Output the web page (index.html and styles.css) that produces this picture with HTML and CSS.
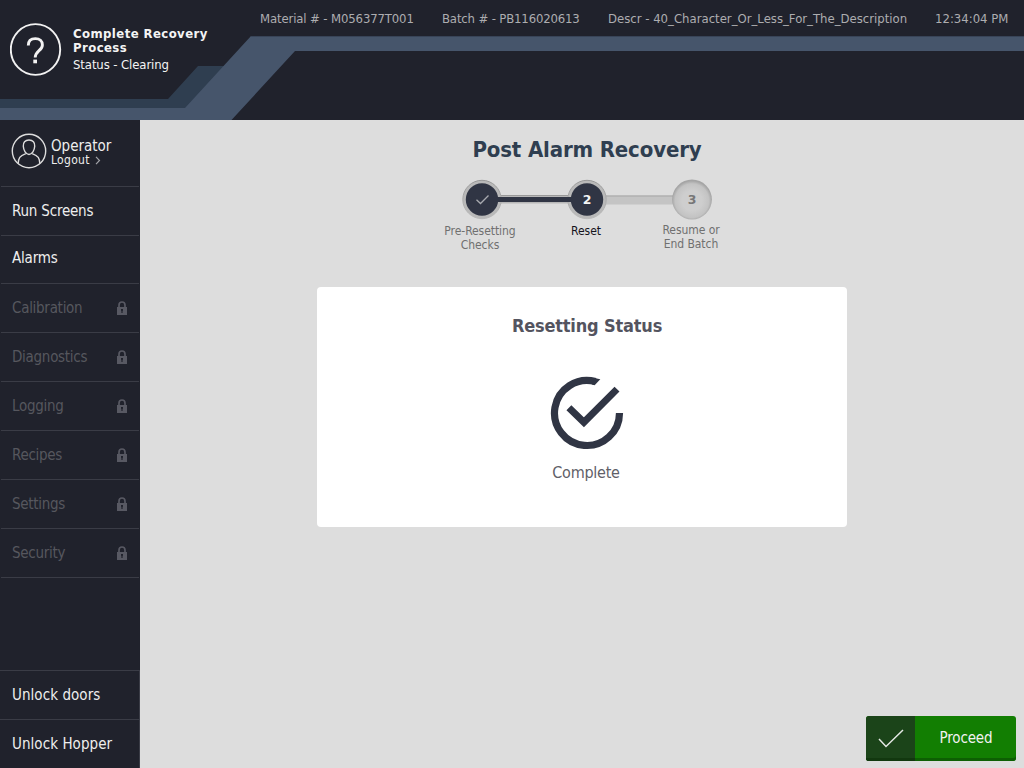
FILE: index.html
```html
<!DOCTYPE html>
<html lang="en">
<head>
<meta charset="utf-8">
<title>Post Alarm Recovery</title>
<link rel="stylesheet" href="styles.css">
</head>
<body>
<svg class="defs" width="0" height="0" aria-hidden="true">
  <symbol id="lock" viewBox="0 0 10 14">
    <path d="M2 7V4.200a3 3.200 0 0 1 6 0V7" fill="none" stroke="currentColor" stroke-width="1.700"/>
    <path fill="currentColor" fill-rule="evenodd" d="M0 6h10v8H0zM4 8v1.800h.4V12h1.200V9.800H6V8z"/>
  </symbol>
</svg>
<div class="app">
  <header class="header">
    <svg class="ribbon" viewBox="0 0 1024 120" aria-hidden="true">
      <path d="M0 99H168L198 66H225L188 110H0Z" fill="#2f3e50"/>
      <path d="M0 108H185L251 36H1024V51H295L231.500 120H0Z" fill="#46556b"/>
      <path d="M251 36.500H1024" stroke="#384458"/>
    </svg>
    <div class="process">
      <svg class="help" width="52" height="54" viewBox="0 0 52 54" aria-hidden="true">
        <ellipse cx="25.500" cy="26.500" rx="24.700" ry="25.400" fill="none" stroke="#f2f2f2" stroke-width="1.900"/>
        <path d="M18.300 22.500C18.300 17.500 21 15.600 25.400 15.600c4.300 0 7 2.400 7 6.300 0 5.700-7.200 6-7.200 12.600" fill="none" stroke="#f2f2f2" stroke-width="2.900"/>
        <rect x="23.300" y="36.600" width="3.700" height="3.700" fill="#f2f2f2"/>
      </svg>
      <div class="process-text">
        <div class="process-name">Complete Recovery<br>Process</div>
        <div class="process-status">Status - Clearing</div>
      </div>
    </div>
    <div class="info">
      <span class="material">Material # - M056377T001</span>
      <span class="batch">Batch # - PB116020613</span>
      <span class="descr">Descr - 40_Character_Or_Less_For_The_Description</span>
      <span class="clock">12:34:04 PM</span>
    </div>
  </header>
  <div class="body">
    <nav class="sidebar">
      <div class="user">
        <svg class="avatar" width="36" height="36" viewBox="0 0 36 36" fill="none" stroke="#dcdcdc" stroke-width="1.400" aria-hidden="true">
          <circle cx="18" cy="18" r="16.700"/>
          <path d="M18 7c-4 0-6 2.600-5.700 6.200.2 4 2.600 8.300 5.700 8.300s5.500-4.300 5.700-8.300c.3-3.600-1.700-6.200-5.700-6.200Z"/>
          <path d="M7.200 30.500c.3-5.500 1.300-7.500 7.600-9.900M28.800 30.500c-.3-5.500-1.300-7.500-7.600-9.900"/>
        </svg>
        <div class="user-text">
          <div class="user-name">Operator</div>
          <div class="logout">Logout <svg class="chevron" width="6" height="9" viewBox="0 0 6 9"><path d="M1 .8 4.500 4.500 1 8.200" fill="none" stroke="#a2a3a8" stroke-width="1.200"/></svg></div>
        </div>
      </div>
      <div class="item run"><span>Run Screens</span></div>
      <div class="item alarms"><span>Alarms</span></div>
      <div class="item locked"><span>Calibration</span><svg class="lock"><use href="#lock"/></svg></div>
      <div class="item locked"><span>Diagnostics</span><svg class="lock"><use href="#lock"/></svg></div>
      <div class="item locked"><span>Logging</span><svg class="lock"><use href="#lock"/></svg></div>
      <div class="item locked"><span>Recipes</span><svg class="lock"><use href="#lock"/></svg></div>
      <div class="item locked"><span>Settings</span><svg class="lock"><use href="#lock"/></svg></div>
      <div class="item locked"><span>Security</span><svg class="lock"><use href="#lock"/></svg></div>
      <div class="bottom">
        <div class="action doors"><span>Unlock doors</span></div>
        <div class="action hopper"><span>Unlock Hopper</span></div>
      </div>
    </nav>
    <main class="main">
      <h1 class="title">Post Alarm Recovery</h1>
      <div class="stepper">
        <svg class="track" width="254" height="42" viewBox="0 0 254 42" aria-hidden="true">
          <defs>
            <linearGradient id="rim" x1="0" y1="0" x2="0" y2="1"><stop offset="0" stop-color="#989898"/><stop offset="1" stop-color="#bababa"/></linearGradient>
            <linearGradient id="bar" x1="0" y1="0" x2="0" y2="1"><stop offset="0" stop-color="#a8a8a8"/><stop offset=".35" stop-color="#c4c4c4"/><stop offset="1" stop-color="#c6c6c6"/></linearGradient>
            <radialGradient id="well" cy=".53"><stop offset=".5" stop-color="#cecece"/><stop offset=".85" stop-color="#c3c3c3"/><stop offset="1" stop-color="#a5a5a5"/></radialGradient>
          </defs>
          <path d="M36 12Q38 16 42 16H110Q114 16 116 12V30Q114 24.500 110 24.500H42Q38 24.500 36 29Z" fill="#b7b7b7"/>
          <path d="M40 16.500H112" stroke="#999"/>
          <path d="M142 11Q143.500 16.500 148 16.500H213Q217.500 16.500 219 11V30Q217.500 25.500 213 25.500H148Q143.500 25.500 142 30Z" fill="#c4c4c4"/>
          <path d="M146 17H215" stroke="#a6a6a6"/>
          <circle cx="22" cy="20.500" r="19.200" fill="#b9b9b9" stroke="url(#rim)"/>
          <circle cx="127" cy="20.500" r="19.200" fill="#b9b9b9" stroke="url(#rim)"/>
          <circle cx="232" cy="20.500" r="19.900" fill="url(#well)"/>
          <path d="M36 20.500H115" stroke="#303544" stroke-width="5"/>
          <circle cx="22" cy="20.500" r="16.200" fill="#303544"/>
          <circle cx="127" cy="20.500" r="16.200" fill="#303544"/>
          <path d="M16.500 20.800 20.500 24.500 28.500 16.500" fill="none" stroke="#a9abb0" stroke-width="1.300"/>
        </svg>
        <div class="numbers"><span class="num two">2</span><span class="num three">3</span></div>
        <div class="labels">
          <div class="label">Pre-Resetting<br>Checks</div>
          <div class="label current">Reset</div>
          <div class="label last">Resume or<br>End Batch</div>
        </div>
      </div>
      <section class="card">
        <h2 class="card-title">Resetting Status</h2>
        <svg class="done" width="74" height="74" viewBox="0 0 74 74" fill="none" stroke="#303544" aria-hidden="true">
          <path d="M45.400 5.600A32.500 32.500 0 1 0 69.500 37" stroke-width="7.200"/>
          <path d="M42 11 50.500 2.600 56 8 48 15Z" fill="#fff" stroke="none"/>
          <path d="M44.300 2.100 50.300 3.300 44.600 9.200 42 8.400Z" fill="#303544" stroke="none"/>
          <path d="M18.900 32.700 33.900 47.300 67 14.100" stroke-width="7" transform="translate(0 -1)"/>
        </svg>
        <div class="complete">Complete</div>
      </section>
      <button class="proceed"><span class="tick"><svg width="26" height="20" viewBox="0 0 26 20"><path d="M1 10 8 17.500 25 1" fill="none" stroke="#e4e8e4" stroke-width="1.500"/></svg></span><span class="proceed-label">Proceed</span></button>
    </main>
  </div>
</div>
</body>
</html>
```
FILE: styles.css
```css
* { box-sizing: border-box; }
body { margin: 0; font-family: "DejaVu Sans Condensed", "DejaVu Sans", sans-serif; font-stretch: condensed; color: #eee; }
.defs { position: absolute; }
.app { width: 1024px; height: 768px; overflow: hidden; display: flex; flex-direction: column; background: #ddd; }
span, .title, .card-title, .label, .complete { white-space: nowrap; }

.header { position: relative; height: 120px; flex: none; background: #20222c; display: flex; justify-content: space-between; }
.ribbon { position: absolute; inset: 0; width: 1024px; height: 120px; }
.process { position: relative; display: flex; width: 250px; padding: 23px 0 0 10px; }
.help { flex: none; }
.process-text { margin: 4px 0 0 11px; color: #f4f4f4; font-size: 13px; }
.process-name { font-weight: 700; line-height: 14px; white-space: nowrap; letter-spacing: .42px; }
.process-status { line-height: 20px; letter-spacing: -.1px; }
.info { position: relative; display: flex; height: 36px; width: 764px; align-items: center; color: #adadb0; font-size: 13px; }
.material { width: 182px; letter-spacing: -.13px; }
.batch { width: 166px; letter-spacing: -.15px; }
.descr { width: 327px; }

.body { flex: 1; display: flex; min-height: 0; }
.sidebar { width: 140px; background: #20222c; display: flex; flex-direction: column; }
.user { height: 67px; margin: 0 1px; padding: 13px 0 0 10px; display: flex; border-bottom: 1px solid #3a3c46; }
.user-text { margin: 5px 0 0 4px; }
.user-name { font-size: 15px; line-height: 16px; }
.logout { font-size: 12px; line-height: 12px; white-space: nowrap; letter-spacing: .3px; }
.chevron { margin-left: 2px; vertical-align: -1px; }
.item { height: 49px; margin: 0 1px; padding: 0 12px 0 11px; display: flex; align-items: center; justify-content: space-between; border-bottom: 1px solid #3a3c46; font-size: 15px; letter-spacing: -.2px; }
.alarms { height: 48px; padding-bottom: 4px; }
.locked { color: #56575e; letter-spacing: -.28px; }
.lock { width: 10px; height: 14px; color: #585963; }
.bottom { margin-top: auto; border-right: 1px solid #3a3c46; }
.action { height: 49px; padding-left: 12px; display: flex; align-items: center; border-top: 1px solid #3a3c46; font-size: 15px; letter-spacing: .06px; }

.main { flex: 1; display: flex; flex-direction: column; }
.title { margin: 15px 0 0 10px; height: 30px; line-height: 30px; text-align: center; font-size: 22px; letter-spacing: -.15px; color: #2f3e50; }
.stepper { position: relative; width: 254px; height: 74px; margin: 14px 0 0 320px; }
.track { display: block; }
.numbers { position: absolute; top: 0; left: 107px; display: flex; gap: 65px; font-family: "DejaVu Sans", sans-serif; font-stretch: normal; font-size: 12.5px; font-weight: 700; line-height: 41px; text-align: center; }
.num { width: 40px; }
.two { color: #f4f4f4; }
.three { color: #777; }
.labels { display: flex; gap: 6px; margin-left: -30px; padding-top: 3px; }
.label { flex: none; width: 100px; text-align: center; font-size: 12px; line-height: 14px; letter-spacing: -.06px; color: #707070; }
.current { color: #14141c; }
.last { margin: -1px 0 0 -1px; }
.card { width: 530px; height: 240px; margin: 34px 0 0 177px; padding: 27px 0 0 10px; border-radius: 4px; background: #fff; display: flex; flex-direction: column; align-items: center; }
.card-title { margin: 0; font-size: 18px; line-height: 24px; letter-spacing: -.18px; color: #54545f; }
.done { margin-top: 38px; }
.complete { margin: 11px 2px 0 0; font-size: 16px; line-height: 24px; letter-spacing: -.25px; color: #5f6068; }
.proceed { margin: auto 8px 7px auto; padding: 0; width: 150px; height: 45px; border: 0; border-radius: 3px; overflow: hidden; display: flex; background: #127e02; box-shadow: inset 0 -3px #0d5f03; color: #f2f2f2; font-family: inherit; font-stretch: condensed; font-size: 15px; letter-spacing: -.15px; }
.tick { width: 49px; height: 45px; padding-top: 1px; background: #1b4419; box-shadow: inset 0 -3px #12380f; display: flex; align-items: center; justify-content: center; }
.proceed-label { flex: 1; line-height: 45px; text-align: center; padding-left: 1px; }
```
